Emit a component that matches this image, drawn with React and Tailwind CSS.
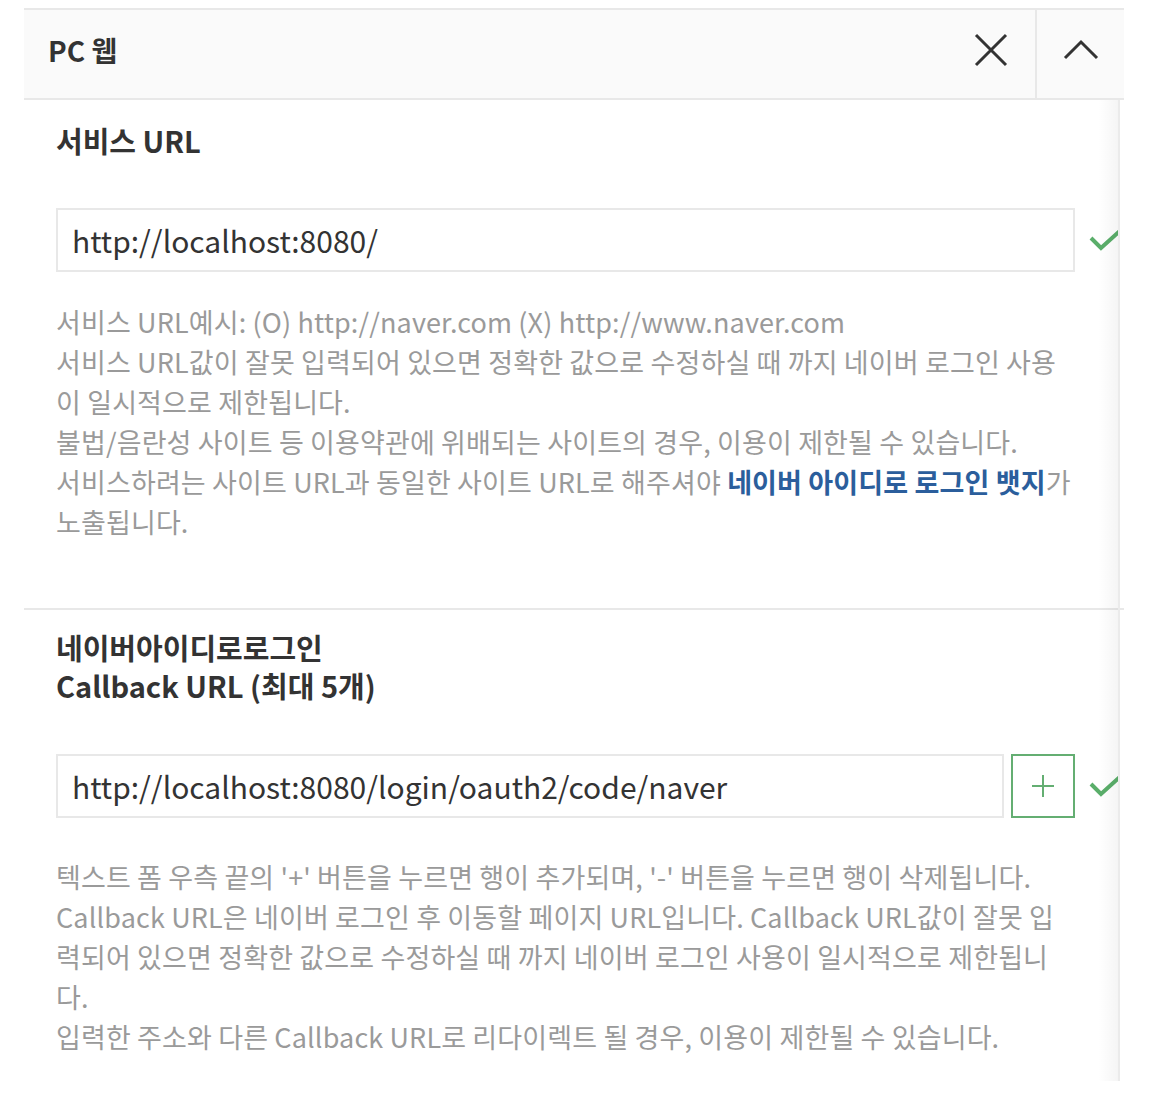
const fontStack = {
  fontFamily: '"Noto Sans CJK KR", "Noto Sans", sans-serif',
};

function CheckIcon() {
  return (
    <svg width="36" height="26" viewBox="0 0 36 26" className="shrink-0">
      <path
        d="M2 11 L12 21 L33 2"
        fill="none"
        stroke="#5aae6a"
        strokeWidth="4"
      />
    </svg>
  );
}

function PlusButton() {
  return (
    <button
      type="button"
      className="flex h-[64px] w-[64px] shrink-0 items-center justify-center border-2 border-[#64ae72] bg-white"
    >
      <svg width="24" height="24" viewBox="0 0 24 24">
        <path d="M12 1 V23 M1 12 H23" stroke="#64ae72" strokeWidth="2" />
      </svg>
    </button>
  );
}

function Lines({ lines }) {
  return (
    <div className="text-[27px] leading-[40px] tracking-[0.005em] text-[#9a9a9a]">
      {lines.map((line, i) => (
        <p key={i} className="whitespace-nowrap">
          {line}
        </p>
      ))}
    </div>
  );
}

export default function App() {
  return (
    <div className="h-[1108px] w-full bg-white pl-[24px] pt-[8px]" style={fontStack}>
      <div className="w-[1100px]">
        {/* header */}
        <div className="flex h-[92px] items-stretch border-y-2 border-[#e8e8e8] bg-[#fafafa] pb-[8px]">
          <h2 className="flex flex-1 items-center pl-[24px] text-[28px] font-bold text-[#333]">
            PC 웹
          </h2>
          <button type="button" className="flex w-[89px] items-center justify-center">
            <svg width="34" height="34" viewBox="0 0 34 34">
              <path d="M2 2 L32 32 M32 2 L2 32" stroke="#333" strokeWidth="3" />
            </svg>
          </button>
          <div className="-mb-[8px] flex w-[89px] items-center justify-center border-l-2 border-[#e8e8e8] pb-[8px]">
            <svg width="36" height="22" viewBox="0 0 36 22">
              <path d="M2 19 L18 3 L34 19" fill="none" stroke="#333" strokeWidth="3" />
            </svg>
          </div>
        </div>

        {/* body */}
        <div className="relative h-[981px] overflow-hidden">
          <section className="pb-[66px] pl-[32px] pt-[20px]">
            <h3 className="text-[29px] font-bold leading-[40px] text-[#333]">
              서비스 URL
            </h3>
            <div className="mt-[48px] flex items-center gap-[14px]">
              <input
                readOnly
                value="http://localhost:8080/"
                className="h-[64px] w-[1019px] shrink-0 border-2 border-[#e8e8e8] px-[14px] text-[30px] text-[#333] outline-none"
                style={fontStack}
              />
              <CheckIcon />
            </div>
            <div className="mt-[30px] text-[27px] leading-[40px] tracking-[0.005em] text-[#9a9a9a]">
              <p className="whitespace-nowrap">
                서비스 URL예시: (O) http://naver.com (X) http://www.naver.com
              </p>
              <p className="whitespace-nowrap">
                서비스 URL값이 잘못 입력되어 있으면 정확한 값으로 수정하실 때 까지 네이버 로그인 사용
              </p>
              <p className="whitespace-nowrap">이 일시적으로 제한됩니다.</p>
              <p className="whitespace-nowrap">
                불법/음란성 사이트 등 이용약관에 위배되는 사이트의 경우, 이용이 제한될 수 있습니다.
              </p>
              <p className="whitespace-nowrap">
                서비스하려는 사이트 URL과 동일한 사이트 URL로 해주셔야{" "}
                <span className="font-bold text-[#2b5e9c]">네이버 아이디로 로그인 뱃지</span>가
              </p>
              <p className="whitespace-nowrap">노출됩니다.</p>
            </div>
          </section>

          <div className="h-[2px] bg-[#e8e8e8]" />

          <section className="pl-[32px] pt-[18px]">
            <h3 className="text-[29px] font-bold leading-[38px] text-[#333]">
              네이버아이디로로그인
              <br />
              Callback URL (최대 5개)
            </h3>
            <div className="mt-[50px] flex items-center">
              <input
                readOnly
                value="http://localhost:8080/login/oauth2/code/naver"
                className="h-[64px] w-[948px] shrink-0 border-2 border-[#e8e8e8] px-[14px] text-[30px] text-[#333] outline-none"
                style={fontStack}
              />
              <div className="ml-[7px]">
                <PlusButton />
              </div>
              <div className="ml-[14px]">
                <CheckIcon />
              </div>
            </div>
            <div className="mt-[39px]">
              <Lines
                lines={[
                  "텍스트 폼 우측 끝의 '+' 버튼을 누르면 행이 추가되며, '-' 버튼을 누르면 행이 삭제됩니다.",
                  "Callback URL은 네이버 로그인 후 이동할 페이지 URL입니다. Callback URL값이 잘못 입",
                  "력되어 있으면 정확한 값으로 수정하실 때 까지 네이버 로그인 사용이 일시적으로 제한됩니",
                  "다.",
                  "입력한 주소와 다른 Callback URL로 리다이렉트 될 경우, 이용이 제한될 수 있습니다.",
                ]}
              />
            </div>
          </section>

          {/* scroll edge shadow */}
          <div className="pointer-events-none absolute bottom-0 right-[4px] top-0 w-[22px] border-r-2 border-[#ebebeb] bg-gradient-to-r from-transparent to-black/[0.04]" />
          <div className="pointer-events-none absolute bottom-0 right-0 top-0 w-[4px] bg-white" />
          <div className="pointer-events-none absolute right-0 top-[508px] h-[2px] w-[4px] bg-[#e8e8e8]" />
        </div>
      </div>
    </div>
  );
}
